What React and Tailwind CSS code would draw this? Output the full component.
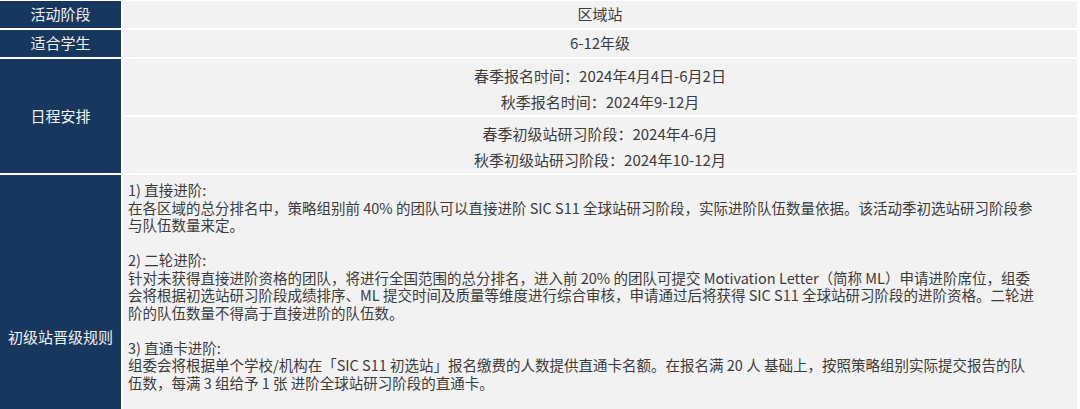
const SCHEDULE = [
  ["春季报名时间：2024年4月4日-6月2日", "秋季报名时间：2024年9-12月"],
  ["春季初级站研习阶段：2024年4-6月", "秋季初级站研习阶段：2024年10-12月"],
];

const RULES = [
  [
    "1) 直接进阶:",
    "在各区域的总分排名中，策略组别前 40% 的团队可以直接进阶 SIC S11 全球站研习阶段，实际进阶队伍数量依据。该活动季初选站研习阶段参",
    "与队伍数量来定。",
  ],
  [
    "2) 二轮进阶:",
    "针对未获得直接进阶资格的团队，将进行全国范围的总分排名，进入前 20% 的团队可提交 Motivation Letter（简称 ML）申请进阶席位，组委",
    "会将根据初选站研习阶段成绩排序、ML 提交时间及质量等维度进行综合审核，申请通过后将获得 SIC S11 全球站研习阶段的进阶资格。二轮进",
    "阶的队伍数量不得高于直接进阶的队伍数。",
  ],
  [
    "3) 直通卡进阶:",
    "组委会将根据单个学校/机构在「SIC S11 初选站」报名缴费的人数提供直通卡名额。在报名满 20 人 基础上，按照策略组别实际提交报告的队",
    "伍数，每满 3 组给予 1 张 进阶全球站研习阶段的直通卡。",
  ],
];

const Label = ({ children, className = "" }) => (
  <div className={`bg-[#17375e] text-[#f2f2f2] flex items-center justify-center text-[15px] ${className}`}>
    {children}
  </div>
);

const Cell = ({ children, className = "" }) => (
  <div className={`bg-[#f2f2f2] text-[#3c3c3c] ${className}`}>{children}</div>
);

export default function App() {
  return (
    <div
      className="w-[1080px] bg-white pt-px pr-[3px] overflow-hidden"
      style={{ fontFamily: '"Noto Sans CJK SC", "Noto Sans", sans-serif' }}
    >
      <div className="grid grid-cols-[121px_1fr] gap-[2px]">
        {/* 活动阶段 */}
        <Label className="h-[27px]">活动阶段</Label>
        <Cell className="h-[27px] flex items-center justify-center text-[15px]">区域站</Cell>

        {/* 适合学生 */}
        <Label className="h-[27px]">适合学生</Label>
        <Cell className="h-[27px] flex items-center justify-center text-[15px]">6-12年级</Cell>

        {/* 日程安排 */}
        <Label className="row-span-2">日程安排</Label>
        {SCHEDULE.map((pair, i) => (
          <Cell
            key={i}
            className="h-[56px] flex flex-col items-center justify-center pt-[3px] text-[15px] leading-[26px]"
          >
            {pair.map((t) => (
              <div key={t}>{t}</div>
            ))}
          </Cell>
        ))}

        {/* 初级站晋级规则 */}
        <Label className="h-[324px]">初级站晋级规则</Label>
        <Cell className="h-[324px] pl-[5px] pt-[6px] text-[14.5px] leading-[17.5px]">
          {RULES.map((block, i) => (
            <div key={i}>
              {i > 0 && <div className="h-[17.5px]" />}
              {block.map((line) => (
                <div key={line} className="whitespace-nowrap">
                  {line}
                </div>
              ))}
            </div>
          ))}
        </Cell>
      </div>
    </div>
  );
}
